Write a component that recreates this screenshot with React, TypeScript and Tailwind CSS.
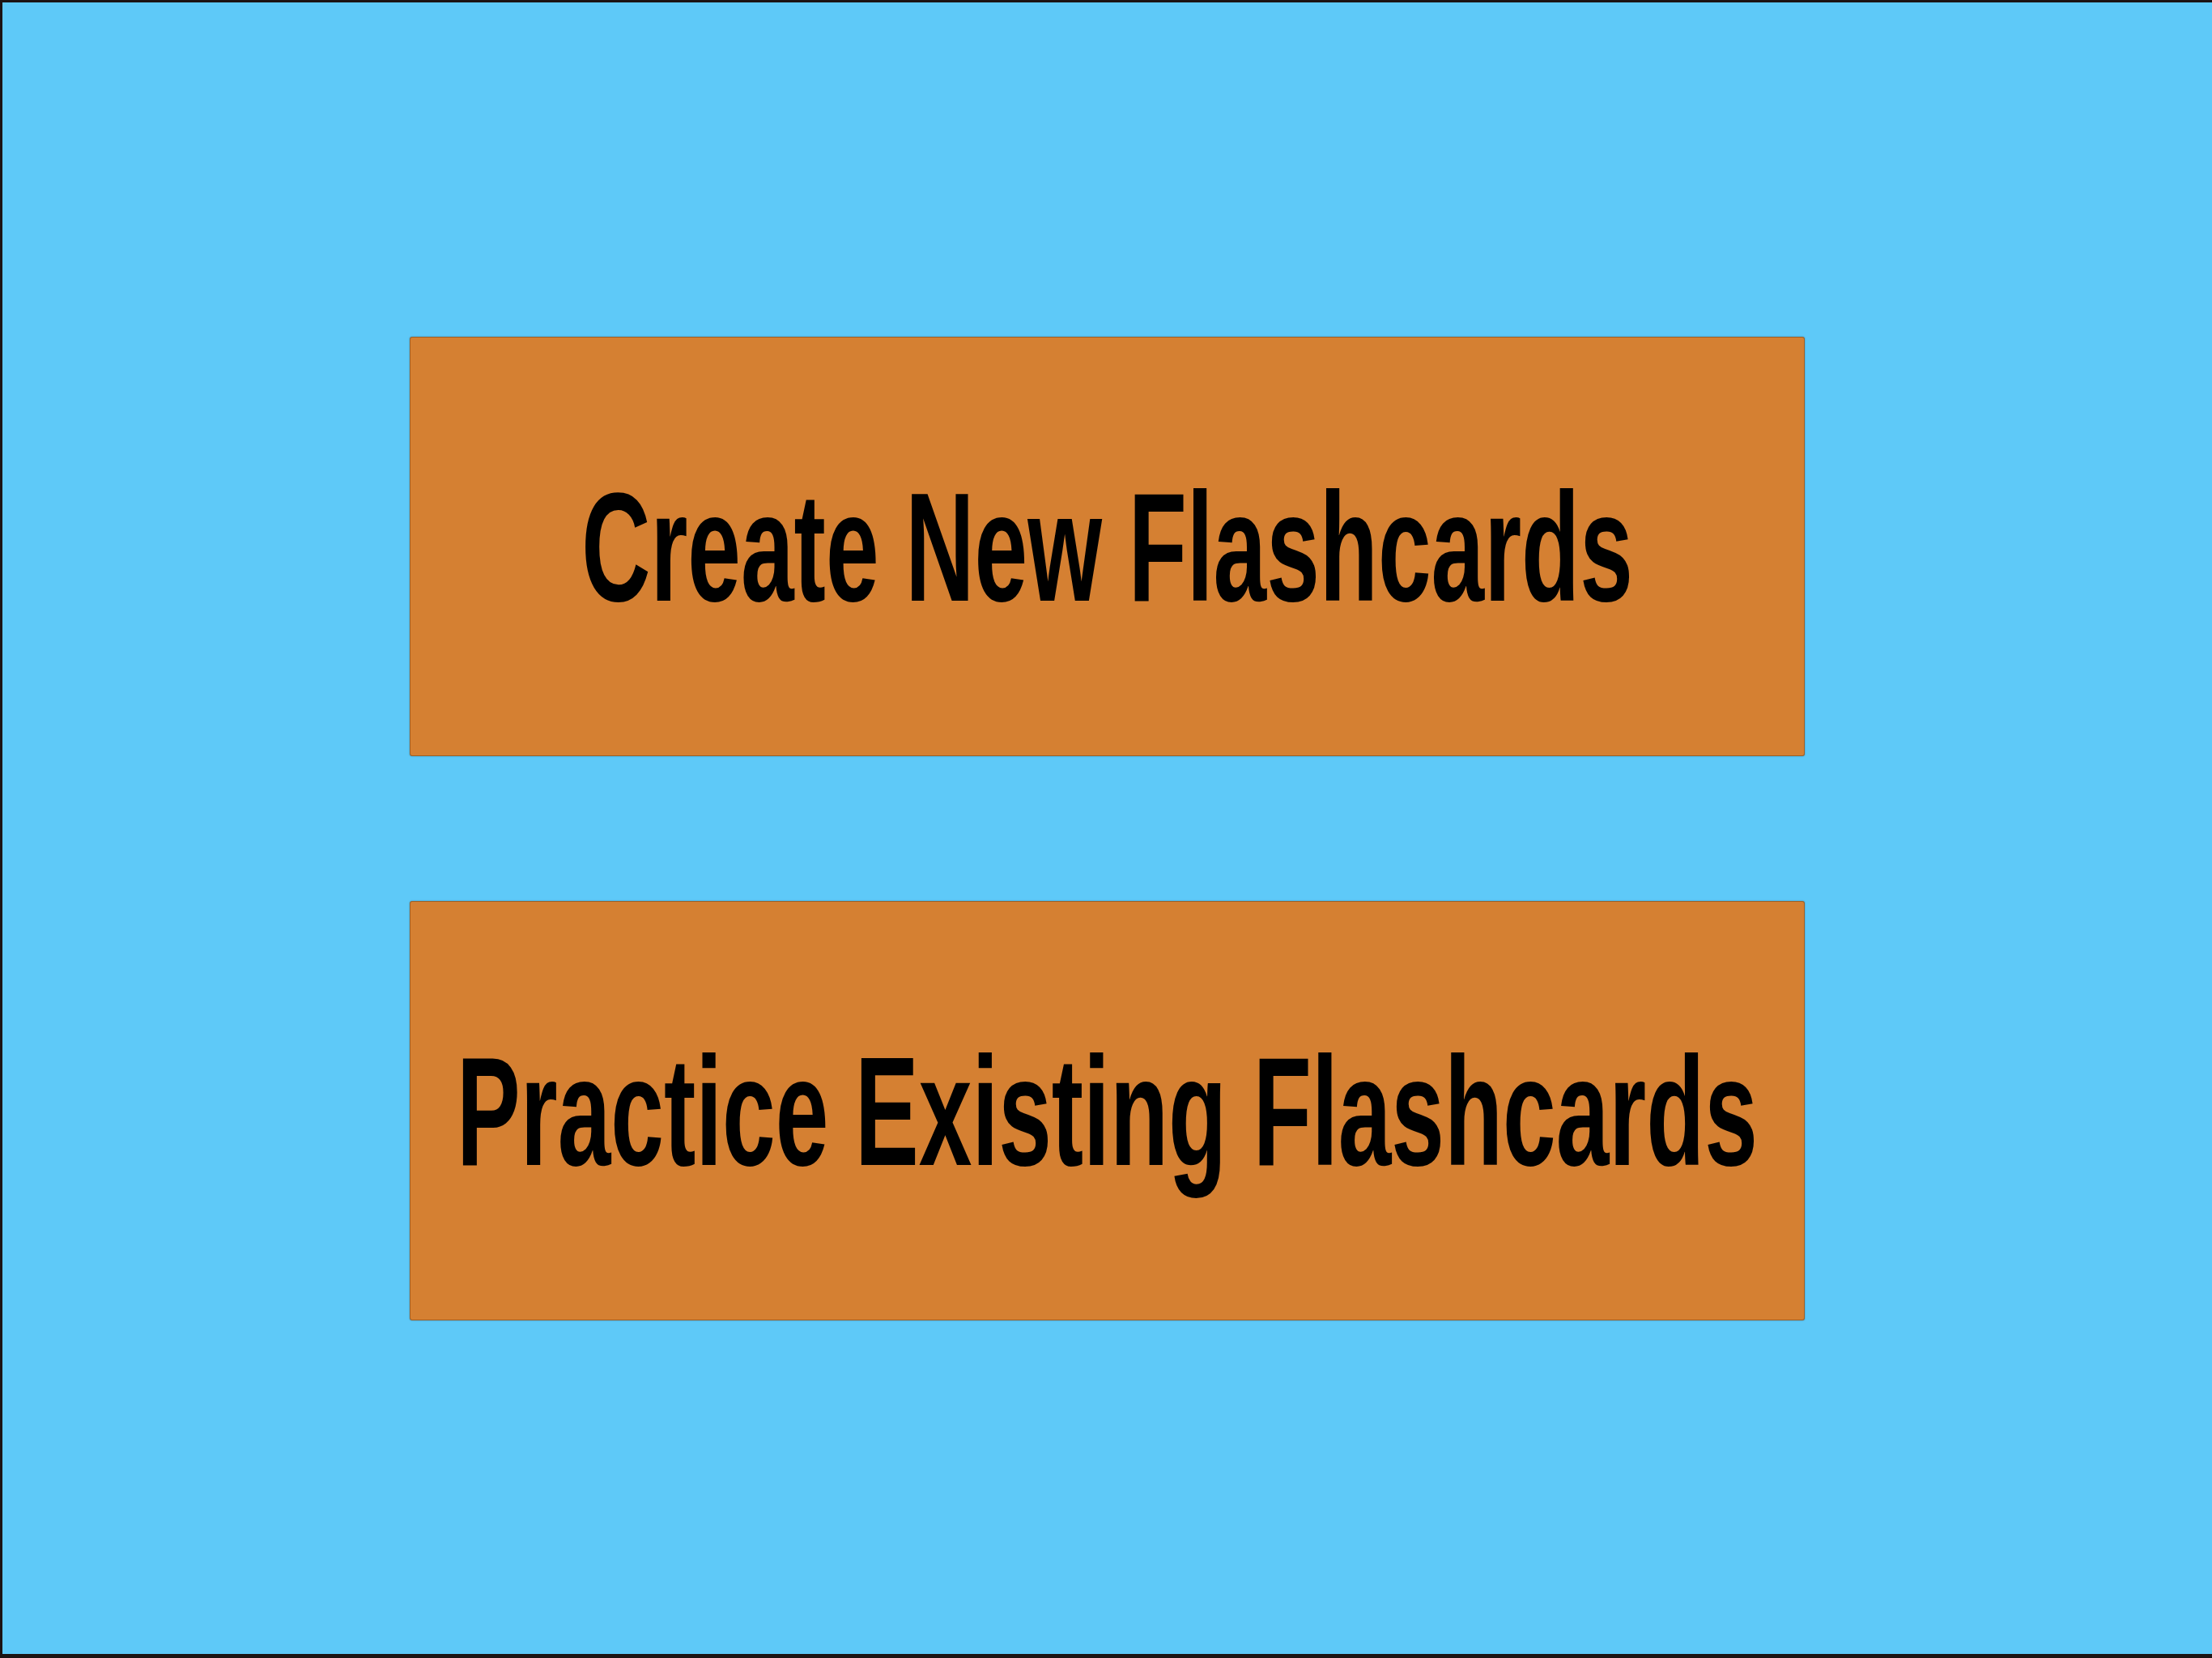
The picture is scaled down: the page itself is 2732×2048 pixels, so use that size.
import React from 'react';

const MenuButton: React.FC<{ label: string }> = ({ label }) => (
    <button
        type="button"
        className="flex h-[518px] w-[1723px] items-center justify-center rounded-[3px] border border-black/25 bg-[#d58032] shadow-[0_0_2px_rgba(0,0,0,0.35)]"
    >
        <span className="inline-block origin-center scale-y-[1.625] font-['Liberation_Sans',Arial,sans-serif] text-[118px] leading-none font-bold whitespace-nowrap text-black">
            {label}
        </span>
    </button>
);

const App: React.FC = () => {
    return (
        <div className="flex h-[2048px] w-[2732px] flex-col items-center justify-center gap-[179px] border-t-[3px] border-b-[5px] border-l-[3px] border-[#1c1414] bg-[#5ec9f8]">
            <MenuButton label="Create New Flashcards" />
            <MenuButton label="Practice Existing Flashcards" />
        </div>
    );
};

export default App;
